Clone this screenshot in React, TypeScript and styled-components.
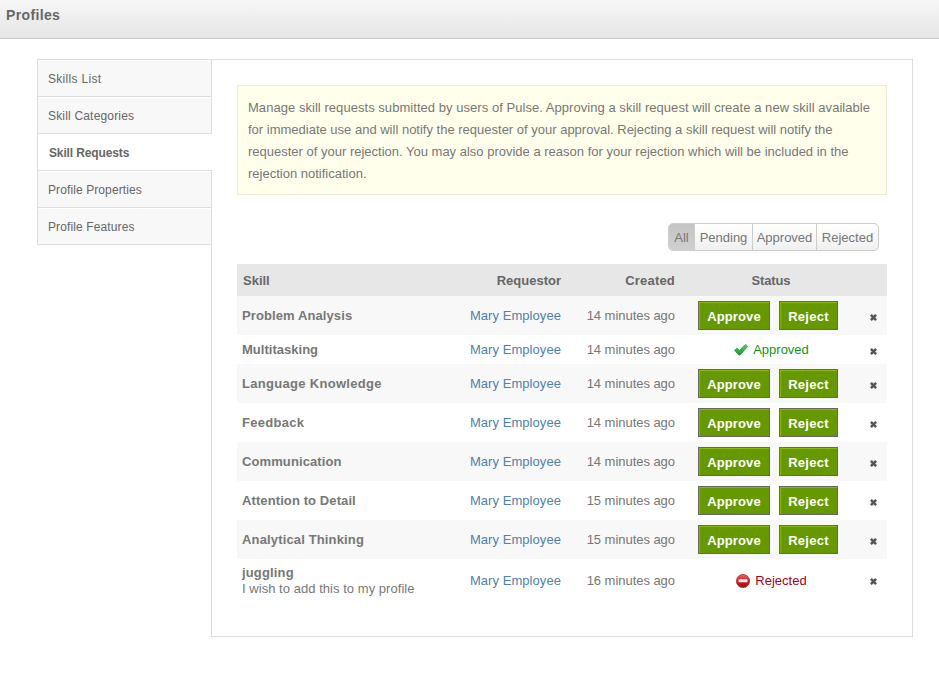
import React from 'react';
import styled, { createGlobalStyle, css } from 'styled-components';

const Global = createGlobalStyle`
  * { box-sizing: border-box; }
  body {
    margin: 0;
    background: #fff;
    color: #777;
    font: 13px/16px "Liberation Sans", Arial, sans-serif;
  }
`;

const Header = styled.header`
  height: 39px;
  padding: 7px 6px 0;
  border-bottom: 1px solid #c6c6c6;
  background: linear-gradient(#f6f6f6, #e5e5e5);
`;

const Title = styled.h1`
  margin: 0;
  color: #666;
  font-size: 14px;
  line-height: 17px;
  letter-spacing: 0.35px;
`;

const Layout = styled.div`
  display: flex;
  align-items: flex-start;
  width: 876px;
  height: 578px;
  margin: 20px 0 0 37px;
  border-top: 1px solid #ddd;
`;

const Nav = styled.nav`
  width: 175px;
  margin-right: -1px;
  border-left: 1px solid #ddd;
  z-index: 1;
`;

const NavItem = styled.a<{ $spacing: number; $active?: boolean }>`
  display: block;
  height: 37px;
  padding: 11px 10px 0;
  border-right: 1px solid #ddd;
  border-bottom: 1px solid #ddd;
  background: #f8f8f8;
  box-shadow: inset 0 1px #fff;
  color: #666;
  font-size: 12px;
  letter-spacing: ${(p) => p.$spacing}px;
  ${(p) =>
    p.$active &&
    css`
      padding-left: 11px;
      border-right: 0;
      background: #fff;
      font-weight: bold;
    `}
`;

const Content = styled.main`
  width: 702px;
  height: 577px;
  padding: 25px 25px 0;
  border: 1px solid #ddd;
  border-top: 0;
`;

const Notice = styled.p`
  height: 110px;
  margin: 0;
  padding: 11px 10px;
  border: 1px solid #eeeed5;
  background: #ffffec;
  line-height: 22px;
  white-space: nowrap;
`;

const NoticeLine = styled.span<{ $spacing?: number }>`
  display: block;
  letter-spacing: ${(p) => p.$spacing ?? 0}px;
`;

const Filters = styled.div`
  display: flex;
  width: 211px;
  height: 28px;
  margin: 28px 0 13px 431px;
  border: 1px solid #ccc;
  border-radius: 5px;
  background: linear-gradient(#fff, #f0f0f0);
  overflow: hidden;
`;

const Filter = styled.button<{ $width: number; $active?: boolean }>`
  flex: 0 0 ${(p) => p.$width}px;
  padding: 2px 0 0;
  border: 0;
  border-right: 1px solid #ccc;
  background: ${(p) => (p.$active ? 'linear-gradient(#c4c4c4, #d0d0d0)' : 'none')};
  color: #777;
  font: inherit;
  &:last-child { border-right: 0; }
`;

const rowGrid = css`
  display: grid;
  grid-template-columns: 200px 124px 114px 190px 22px;
  align-items: center;
`;

const TableHead = styled.div`
  ${rowGrid}
  height: 32px;
  padding-top: 2px;
  background: #e7e7e7;
  color: #666;
  font-weight: bold;
`;

const Row = styled.div<{ $height: number; $shaded: boolean }>`
  ${rowGrid}
  height: ${(p) => p.$height}px;
  background: ${(p) => (p.$shaded ? '#f8f8f8' : '#fff')};
`;

const HeadCell = styled.div<{ $align: 'left' | 'right' | 'center'; $spacing?: number }>`
  padding-left: ${(p) => (p.$align === 'left' ? 6 : p.$align === 'center' ? 2 : 0)}px;
  text-align: ${(p) => p.$align};
  letter-spacing: ${(p) => p.$spacing ?? 0}px;
`;

const Skill = styled.div`
  padding-left: 5px;
  white-space: nowrap;
`;

const SkillName = styled.strong<{ $spacing: number }>`
  display: block;
  letter-spacing: ${(p) => p.$spacing}px;
`;

const Reason = styled.span`
  display: block;
  letter-spacing: 0.04px;
`;

const Requestor = styled.a`
  color: #4e82ac;
  letter-spacing: 0.06px;
  text-align: right;
`;

const Created = styled.div`
  letter-spacing: -0.04px;
  text-align: right;
`;

const Actions = styled.div`
  display: flex;
  gap: 9px;
  padding-left: 23px;
`;

const ActionButton = styled.button<{ $width: number; $spacing: number }>`
  width: ${(p) => p.$width}px;
  height: 29px;
  padding: 2px 0 0;
  border: 1px solid #666;
  background: #690;
  box-shadow: inset 1px 1px #8b0;
  color: #fff;
  font: bold 13px "Liberation Sans", Arial, sans-serif;
  letter-spacing: ${(p) => p.$spacing}px;
`;

const Status = styled.div<{ $color: string }>`
  display: flex;
  align-items: center;
  justify-content: center;
  gap: 5px;
  padding-left: 3px;
  color: ${(p) => p.$color};
`;

const Remove = styled.button<{ $raised: boolean }>`
  display: flex;
  margin: ${(p) => (p.$raised ? 1 : 3)}px 0 0 5px;
  padding: 0;
  border: 0;
  background: none;
`;

const CheckIcon = () => (
  <svg width="14" height="14" viewBox="0 0 14 14">
    <defs>
      <linearGradient id="check" x1="0" y1="0" x2="0" y2="1">
        <stop offset="0" stopColor="#65d268" />
        <stop offset="1" stopColor="#149431" />
      </linearGradient>
    </defs>
    <path d="M.5 7.4 2.9 5.1l2.6 2.2 6-6 2.2 2.1L6.2 12H4.8Z" fill="url(#check)" stroke="#269a3a" strokeWidth=".7" />
  </svg>
);

const StopIcon = () => (
  <svg width="14" height="14" viewBox="0 0 14 14">
    <defs>
      <linearGradient id="stop" x1="0" y1="0" x2="0" y2="1">
        <stop offset="0" stopColor="#ea6868" />
        <stop offset=".5" stopColor="#cf1c20" />
        <stop offset="1" stopColor="#a80b10" />
      </linearGradient>
    </defs>
    <circle cx="7" cy="7" r="6.6" fill="url(#stop)" stroke="#a52226" strokeWidth=".7" />
    <rect x="2.5" y="5.2" width="9" height="3" rx=".5" fill="#f5eeee" />
  </svg>
);

const CrossIcon = () => (
  <svg width="7" height="7" viewBox="0 0 7 7">
    <path d="M.9.9 6.1 6.1M6.1.9.9 6.1" stroke="#555" strokeWidth="2.6" />
  </svg>
);

type State = 'pending' | 'approved' | 'rejected';
interface Request {
  skill: string;
  spacing: number;
  minutes: number;
  state: State;
  reason?: string;
}

const requests: Request[] = [
  { skill: 'Problem Analysis', spacing: 0.1, minutes: 14, state: 'pending' },
  { skill: 'Multitasking', spacing: 0.02, minutes: 14, state: 'approved' },
  { skill: 'Language Knowledge', spacing: 0.3, minutes: 14, state: 'pending' },
  { skill: 'Feedback', spacing: 0.27, minutes: 14, state: 'pending' },
  { skill: 'Communication', spacing: 0.1, minutes: 14, state: 'pending' },
  { skill: 'Attention to Detail', spacing: 0.1, minutes: 15, state: 'pending' },
  { skill: 'Analytical Thinking', spacing: 0.15, minutes: 15, state: 'pending' },
  { skill: 'juggling', spacing: 0.15, minutes: 16, state: 'rejected', reason: 'I wish to add this to my profile' },
];

const rowHeight: Record<State, number> = { pending: 39, approved: 29, rejected: 44 };

const StatusCell = ({ state }: { state: State }) => {
  if (state === 'approved') return <Status $color="#149614"><CheckIcon />Approved</Status>;
  if (state === 'rejected') return <Status $color="#a8001c"><StopIcon />Rejected</Status>;
  return (
    <Actions>
      <ActionButton $width={72} $spacing={0.1}>Approve</ActionButton>
      <ActionButton $width={59} $spacing={0.28}>Reject</ActionButton>
    </Actions>
  );
};

export default function App() {
  return (
    <>
      <Global />
      <Header><Title>Profiles</Title></Header>
      <Layout>
        <Nav>
          <NavItem $spacing={0.3}>Skills List</NavItem>
          <NavItem $spacing={0.18}>Skill Categories</NavItem>
          <NavItem $spacing={-0.13} $active>Skill Requests</NavItem>
          <NavItem $spacing={0.1}>Profile Properties</NavItem>
          <NavItem $spacing={0.12}>Profile Features</NavItem>
        </Nav>
        <Content>
          <Notice>
            <NoticeLine $spacing={0.045}>Manage skill requests submitted by users of Pulse. Approving a skill request will create a new skill available</NoticeLine>
            <NoticeLine>for immediate use and will notify the requester of your approval. Rejecting a skill request will notify the</NoticeLine>
            <NoticeLine>requester of your rejection. You may also provide a reason for your rejection which will be included in the</NoticeLine>
            <NoticeLine>rejection notification.</NoticeLine>
          </Notice>
          <Filters>
            <Filter $width={26} $active>All</Filter>
            <Filter $width={58}>Pending</Filter>
            <Filter $width={64}>Approved</Filter>
            <Filter $width={61}>Rejected</Filter>
          </Filters>
          <TableHead>
            <HeadCell $align="left">Skill</HeadCell>
            <HeadCell $align="right">Requestor</HeadCell>
            <HeadCell $align="right" $spacing={0.2}>Created</HeadCell>
            <HeadCell $align="center" $spacing={-0.15}>Status</HeadCell>
          </TableHead>
          {requests.map((r, i) => (
            <Row key={r.skill} $height={rowHeight[r.state]} $shaded={i % 2 === 0}>
              <Skill>
                <SkillName $spacing={r.spacing}>{r.skill}</SkillName>
                {r.reason && <Reason>{r.reason}</Reason>}
              </Skill>
              <Requestor>Mary Employee</Requestor>
              <Created>{r.minutes} minutes ago</Created>
              <StatusCell state={r.state} />
              <Remove aria-label="Remove" $raised={r.state === 'rejected'}><CrossIcon /></Remove>
            </Row>
          ))}
        </Content>
      </Layout>
    </>
  );
}
